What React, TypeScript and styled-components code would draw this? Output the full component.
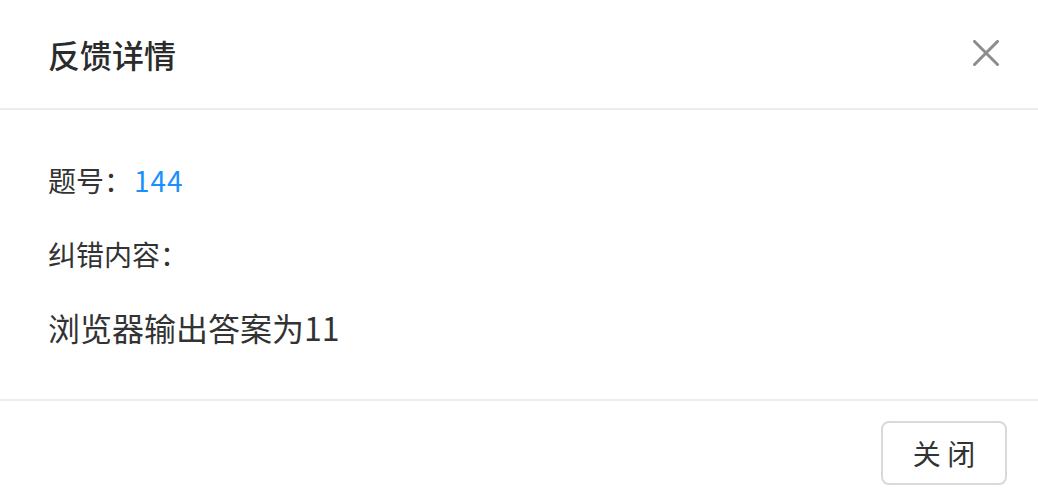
import React from "react";
import styled, { createGlobalStyle } from "styled-components";

const Global = createGlobalStyle`
  html, body { margin: 0; padding: 0; background: #fff; }
  body { font-family: "Noto Sans CJK SC", "Noto Sans", sans-serif; color: #333; }
  * { box-sizing: border-box; }
`;

const Modal = styled.div`
  position: relative;
  width: 1038px;
  height: 500px;
  background: #fff;
  display: flex;
  flex-direction: column;
`;

const Header = styled.div`
  padding: 32px 48px;
  border-bottom: 2px solid #ececec;
`;

const Title = styled.div`
  font-size: 32px;
  line-height: 44px;
  font-weight: 500;
  color: #2b2b2b;
`;

const CloseButton = styled.button`
  position: absolute;
  top: 0;
  right: 0;
  width: 104px;
  height: 106px;
  border: none;
  background: transparent;
  padding: 0;
  display: flex;
  align-items: center;
  justify-content: center;
  cursor: pointer;
`;

const Body = styled.div`
  padding: 48px;
  display: flex;
  flex-direction: column;
  border-bottom: 2px solid #ececec;
`;

const Row = styled.div<{ $gap?: number }>`
  font-size: 28px;
  line-height: 44px;
  color: #333;
  margin-top: ${(p) => p.$gap ?? 0}px;
`;

const Num = styled.span`
  color: #1890ff;
  margin-left: 2px;
  letter-spacing: 1px;
`;

const Content = styled.div`
  font-size: 32px;
  line-height: 48px;
  color: #333;
  margin-top: 27px;
`;

const Footer = styled.div`
  padding: 20px 31px 20px 32px;
  display: flex;
  justify-content: flex-end;
`;

const Button = styled.button`
  height: 64px;
  width: 126px;
  padding: 0;
  border: 2px solid #d9d9d9;
  border-radius: 8px;
  background: #fff;
  font-family: "Noto Sans CJK SC", "Noto Sans", sans-serif;
  font-size: 28px;
  color: #333;
  cursor: pointer;
`;

export default function App() {
  return (
    <>
      <Global />
      <Modal>
        <Header>
          <Title>反馈详情</Title>
        </Header>
        <CloseButton aria-label="close">
          <svg width="26" height="26" viewBox="0 0 26 26">
            <path d="M1.5 1.5 L24.5 24.5 M24.5 1.5 L1.5 24.5" stroke="#8c8c8c" strokeWidth="3" strokeLinecap="square" fill="none" />
          </svg>
        </CloseButton>
        <Body>
          <Row>
            题号：<Num>144</Num>
          </Row>
          <Row $gap={30}>纠错内容：</Row>
          <Content>浏览器输出答案为11</Content>
        </Body>
        <Footer>
          <Button>关 闭</Button>
        </Footer>
      </Modal>
    </>
  );
}
